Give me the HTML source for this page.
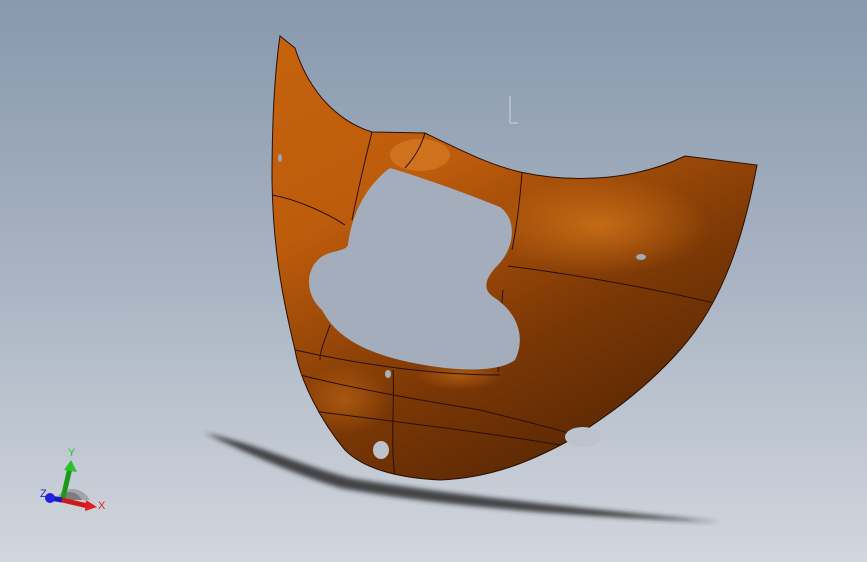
<!DOCTYPE html>
<html><head><style>html,body{margin:0;padding:0;width:867px;height:562px;overflow:hidden}</style></head>
<body>
<svg width="867" height="562" viewBox="0 0 867 562" xmlns="http://www.w3.org/2000/svg">
<defs>
<linearGradient id="bg" x1="0" y1="0" x2="0" y2="1">
<stop offset="0" stop-color="#8898ae"/><stop offset="0.5" stop-color="#a9b4c3"/><stop offset="1" stop-color="#d2d6dd"/></linearGradient>
<linearGradient id="or" x1="0.1" y1="0.1" x2="0.7" y2="0.9">
<stop offset="0" stop-color="#c8640e"/><stop offset="0.4" stop-color="#bd5c0c"/><stop offset="0.7" stop-color="#7c3805"/><stop offset="1" stop-color="#4e2204"/></linearGradient>
<radialGradient id="hl" cx="0.5" cy="0.5" r="0.5">
<stop offset="0" stop-color="#e2801e" stop-opacity="0.8"/><stop offset="1" stop-color="#e2801e" stop-opacity="0"/></radialGradient>
<filter id="bl" x="-20%" y="-50%" width="140%" height="200%"><feGaussianBlur stdDeviation="2.5"/></filter>
<clipPath id="cp"><path id="sh" d="M280 36 L295 48 C310 95 340 122 372 132 L425 133 C460 150 490 165 520 172 C580 185 640 178 685 156 L757 165 C745 230 725 300 680 350 C640 395 600 420 570 440 C530 462 490 478 440 480 C400 478 365 470 345 450 C320 420 300 380 295 350 C283 300 273 250 272 180 C272 120 275 70 280 36 Z"/></clipPath>
</defs>
<rect width="867" height="562" fill="url(#bg)"/>
<path d="M205 433 C260 445 300 465 350 478 C450 495 600 510 720 522 C600 518 450 508 340 488 C290 473 240 450 205 433 Z" fill="#222" filter="url(#bl)" opacity="0.8"/>
<g clip-path="url(#cp)">
<rect width="867" height="562" fill="url(#or)"/>
<ellipse cx="600" cy="225" rx="110" ry="50" fill="url(#hl)" opacity="0.8"/>
<ellipse cx="420" cy="155" rx="30" ry="16" fill="#f09a40" opacity="0.35"/>
<ellipse cx="460" cy="375" rx="45" ry="15" fill="url(#hl)" opacity="0.6"/>
<ellipse cx="345" cy="400" rx="45" ry="35" fill="url(#hl)" opacity="0.5"/>
<g fill="none" stroke="#2a1000" stroke-width="1">
<path d="M272 195 C300 200 330 215 345 225"/>
<path d="M372 132 C365 160 358 190 352 220"/>
<path d="M425 133 C420 150 412 160 405 168"/>
<path d="M522 172 C520 200 516 230 512 250"/>
<path d="M508 266 C580 275 660 290 722 305"/>
<path d="M503 290 C500 320 500 345 498 372"/>
<path d="M295 350 C340 360 420 375 500 375"/>
<path d="M300 375 C360 390 420 400 480 410 C520 420 560 430 575 435"/>
<path d="M305 410 C380 420 470 430 560 445"/>
<path d="M330 325 C325 340 320 350 320 360"/>
<path d="M393 370 C395 400 390 440 395 478"/>
</g>
</g>
<use href="#sh" fill="none" stroke="#2a1000" stroke-width="1"/>
<path d="M390 168 C430 180 470 195 500 207 C518 220 515 250 495 268 C485 280 482 290 495 298 C520 315 525 340 515 360 C495 375 440 370 400 360 C360 350 335 335 322 310 C305 295 305 270 320 258 C330 250 345 252 348 245 C350 225 360 190 390 168 Z" fill="#a3adbb"/>
<ellipse cx="381" cy="450" rx="8" ry="9" fill="#bcc3cd"/>
<ellipse cx="583" cy="437" rx="18" ry="10" fill="#bcc3cd"/>
<ellipse cx="641" cy="257" rx="5" ry="3" fill="#a0aaba"/>
<ellipse cx="388" cy="374" rx="3" ry="4" fill="#a9b3c0"/>
<ellipse cx="280" cy="158" rx="2" ry="4" fill="#9aa5b5"/>
<g stroke="#d0d4da" stroke-width="1" fill="none"><path d="M510 96 V123 H518"/></g>
<g>
<path d="M55 500 A22 28 0 0 1 90 500 Z" fill="#888" opacity="0.6"/>
<path d="M58 500 A15 20 0 0 1 82 500 Z" fill="#666" opacity="0.6"/>
<line x1="62" y1="502" x2="70" y2="468" stroke="#1a9a1a" stroke-width="5"/>
<polygon points="64,470 71,460 77,472" fill="#2ac02a"/>
<line x1="62" y1="500" x2="88" y2="506" stroke="#d01818" stroke-width="5"/>
<polygon points="86,500 97,507 85,511" fill="#e02020"/>
<line x1="62" y1="500" x2="50" y2="498" stroke="#1818c0" stroke-width="5"/>
<circle cx="50" cy="498" r="5" fill="#2020e0"/>
<text x="68" y="456" font-family="Liberation Sans,sans-serif" font-size="11" fill="#2ac02a">Y</text>
<text x="98" y="509" font-family="Liberation Sans,sans-serif" font-size="11" fill="#e02020">X</text>
<text x="40" y="497" font-family="Liberation Sans,sans-serif" font-size="11" fill="#2020d0">Z</text>
</g>
</svg>
</body></html>
